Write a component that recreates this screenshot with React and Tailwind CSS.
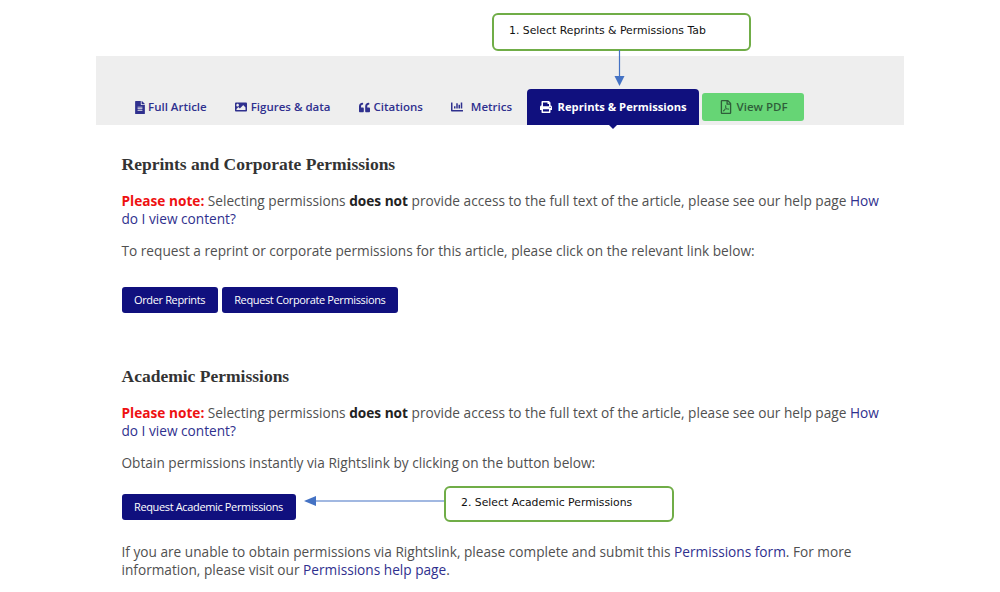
import React from 'react';
import { FaFileAlt, FaImage, FaQuoteLeft, FaChartBar, FaPrint, FaRegFilePdf } from 'react-icons/fa';

const tabs = [
  { label: 'Full Article', icon: FaFileAlt, iconClass: 'h-[13px] w-[10px]', className: 'pl-[39px] pr-[14px]', gap: 'gap-[3px]' },
  { label: 'Figures & data', icon: FaImage, iconClass: 'h-[12px] w-[12px]', className: 'pl-[14px] pr-[15px]', gap: 'gap-[4px]' },
  { label: 'Citations', icon: FaQuoteLeft, iconClass: 'h-[11px] w-[11px]', className: 'px-[14px]', gap: 'gap-[3px]' },
  { label: 'Metrics', icon: FaChartBar, iconClass: 'h-[12px] w-[12px]', className: 'px-[14px]', gap: 'gap-[8px]' },
];

function Tab({ tab }) {
  const Icon = tab.icon;
  return (
    <a className={`flex h-[36px] items-center text-[11.5px] font-semibold text-[#2f308e] ${tab.className} ${tab.gap}`}>
      <Icon className={tab.iconClass} />
      {tab.label}
    </a>
  );
}

function Button({ children }) {
  return (
    <a className="flex h-[26px] items-center rounded-[3px] bg-[#10107e] px-[12.5px] text-[11px] font-medium tracking-[-0.36px] text-white">
      {children}
    </a>
  );
}

function Note() {
  return (
    <p className="text-[13.67px] leading-[18px]">
      <strong className="font-bold text-[#ee1111]">Please note:</strong> Selecting permissions{' '}
      <strong className="font-bold text-[#222222]">does not</strong> provide access to the full text of the article,
      please see our help page <a className="text-[#2f308e]">How do I view content?</a>
    </p>
  );
}

function Callout({ className, children }) {
  return (
    <div className={`absolute flex items-center rounded-[6px] border-2 border-[#70ad47] bg-white font-['DejaVu_Sans',sans-serif] text-[10.85px] text-[#111111] ${className}`}>
      {children}
    </div>
  );
}

export default function App() {
  return (
    <div className="relative h-[592px] w-[1000px] overflow-hidden bg-white font-['Open_Sans',sans-serif] text-[#505050]">
      <div className="mx-[96px] pt-[56px]">
        <div className="flex h-[69px] items-end bg-[#eeeeee]">
          <div className="flex h-[36px] items-center">
            {tabs.map((tab) => (
              <Tab key={tab.label} tab={tab} />
            ))}
          </div>
          <a className="relative ml-[1px] flex h-[36px] w-[172px] items-center justify-center gap-[6px] rounded-t-[4px] bg-[#10107e] text-[11.2px] font-bold text-white">
            <FaPrint className="h-[12px] w-[12px]" />
            Reprints &amp; Permissions
            <span className="absolute -bottom-[4px] left-[81px] h-0 w-0 border-x-[5px] border-t-[5px] border-x-transparent border-t-[#10107e]" />
          </a>
          <a className="mb-[4px] ml-[3px] flex h-[28px] w-[102px] items-center justify-center gap-[4px] rounded-[3px] bg-[#66d575] text-[11.5px] font-semibold text-[#2f5d3a]">
            <FaRegFilePdf className="h-[14px] w-[14px]" />
            View PDF
          </a>
        </div>

        <div className="pl-[25.5px] pr-[15px]">
          <h2 className="mt-[29px] font-['Liberation_Serif',serif] text-[17.5px] leading-[20px] font-bold text-[#333333]">
            Reprints and Corporate Permissions
          </h2>
          <div className="mt-[18px]">
            <Note />
          </div>
          <p className="mt-[14px] text-[13.67px] leading-[18px]">
            To request a reprint or corporate permissions for this article, please click on the relevant link below:
          </p>
          <div className="mt-[27px] flex gap-[4px]">
            <Button>Order Reprints</Button>
            <Button>Request Corporate Permissions</Button>
          </div>

          <h2 className="mt-[53px] font-['Liberation_Serif',serif] text-[17.5px] leading-[20px] font-bold text-[#333333]">
            Academic Permissions
          </h2>
          <div className="mt-[18px]">
            <Note />
          </div>
          <p className="mt-[14px] text-[13.67px] leading-[18px]">
            Obtain permissions instantly via Rightslink by clicking on the button below:
          </p>
          <div className="mt-[22px] flex">
            <Button>Request Academic Permissions</Button>
          </div>
          <p className="mt-[23px] text-[13.67px] leading-[18px]">
            If you are unable to obtain permissions via Rightslink, please complete and submit this{' '}
            <a className="text-[#2f308e]">Permissions form</a>. For more information, please visit our{' '}
            <a className="text-[#2f308e]">Permissions help page</a>.
          </p>
        </div>
      </div>

      <Callout className="left-[492px] top-[13px] h-[38px] w-[259px] pb-[2px] pl-[15px]">1. Select Reprints &amp; Permissions Tab</Callout>
      <Callout className="left-[444px] top-[486px] h-[36px] w-[230px] pb-[2px] pl-[15px]">2. Select Academic Permissions</Callout>

      <svg className="absolute left-[612px] top-[50px]" width="16" height="37" viewBox="0 0 16 37">
        <path d="M7.5 0V27" stroke="#4472c4" strokeWidth="1.2" />
        <path d="M2.5 26H12.5L7.5 36Z" fill="#4472c4" />
      </svg>
      <svg className="absolute left-[302px] top-[494px]" width="143" height="14" viewBox="0 0 143 14">
        <path d="M12 7H142" stroke="#4472c4" strokeWidth="1.2" />
        <path d="M14 2V12L2 7Z" fill="#4472c4" />
      </svg>
    </div>
  );
}
